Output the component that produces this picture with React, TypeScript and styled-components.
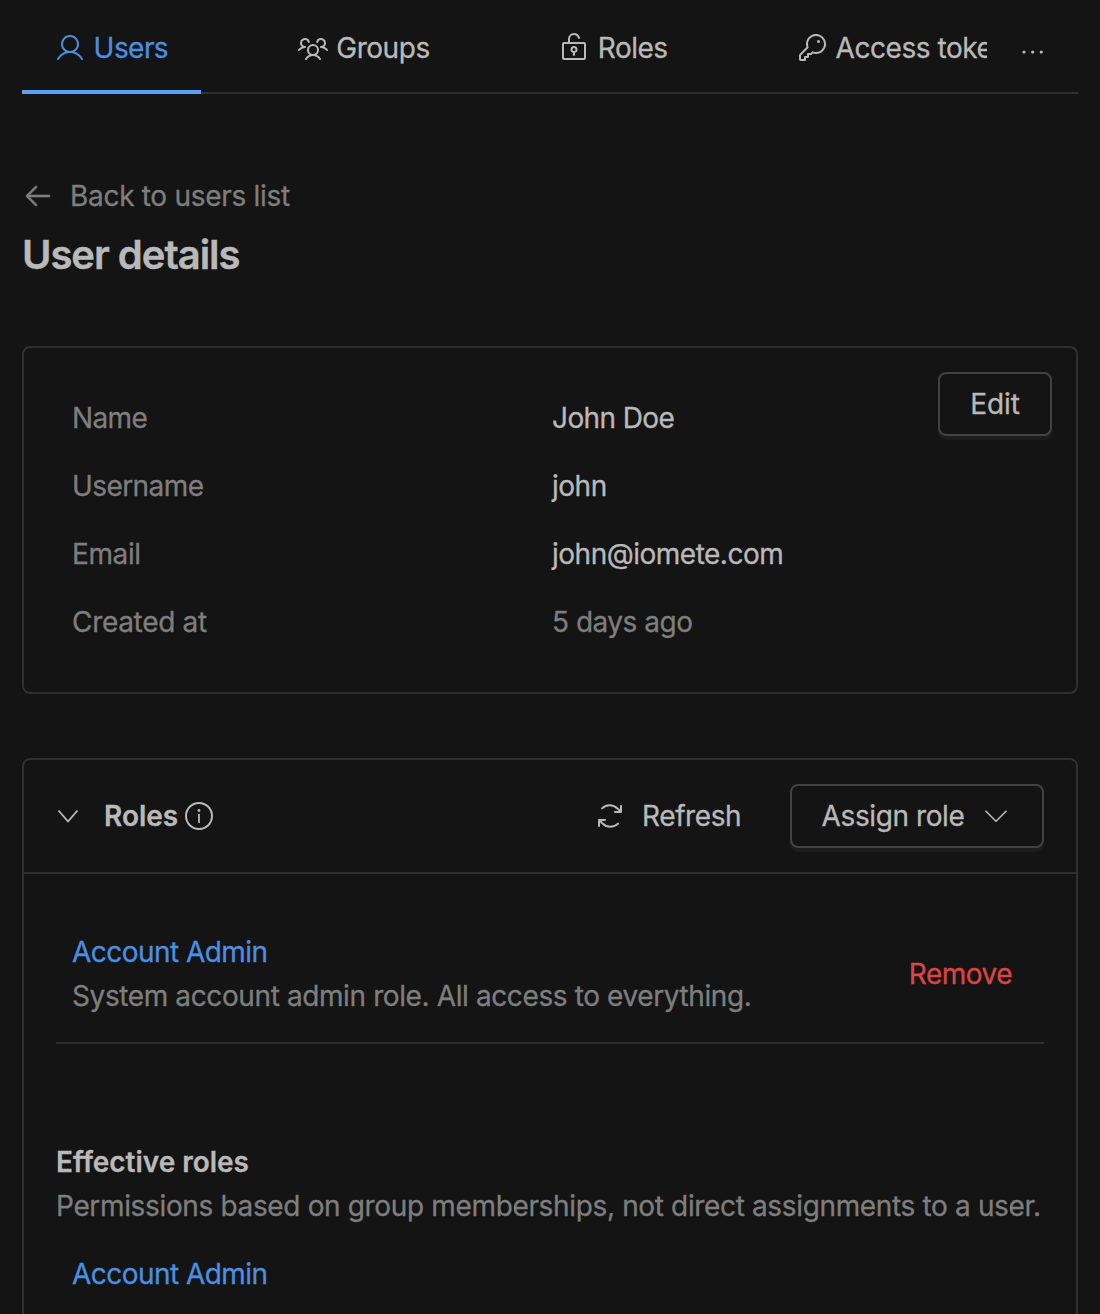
import React from "react";
import styled, { createGlobalStyle } from "styled-components";
import {
  PiUser,
  PiUsersThree,
  PiLockKeyOpen,
  PiKey,
  PiArrowLeft,
  PiArrowsClockwise,
} from "react-icons/pi";

const color = {
  page: "#141414",
  line: "#303030",
  control: "#424242",
  text: "#b9b9b9",
  muted: "#7e7e7e",
  link: "#4b8fe0",
  accent: "#58a1fb",
  danger: "#dc4446",
};

const GlobalStyle = createGlobalStyle`
  * { box-sizing: border-box; }
  body {
    margin: 0;
    background: ${color.page};
    color: ${color.text};
    font: 400 28px/44px Inter, "Liberation Sans", sans-serif;
    overflow: hidden;
  }
  svg { display: block; flex: none; }
`;

const Page = styled.main`
  height: 1314px;
  padding: 0 22px;
  overflow: hidden;
`;

const TabBar = styled.nav`
  display: flex;
  height: 94px;
  border-bottom: 2px solid ${color.line};
`;

const TabList = styled.div`
  display: flex;
  gap: 64px;
  width: 965px;
  height: 94px;
  overflow: hidden;
`;

const Tab = styled.div<{ $active?: boolean; $width: number }>`
  display: flex;
  align-items: center;
  flex: none;
  gap: 7.6px;
  width: ${(p) => p.$width}px;
  height: 94px;
  padding: 6px 0 0 32px;
  border-bottom: 4px solid ${(p) => (p.$active ? color.accent : "transparent")};
  color: ${(p) => (p.$active ? color.link : color.text)};
  white-space: nowrap;
`;

const Label = styled.span<{ $track?: number }>`
  letter-spacing: ${(p) => p.$track ?? -0.4}px;
  -webkit-text-stroke: 0.3px currentColor;
`;

const More = styled.div`
  display: flex;
  flex: 1;
  align-items: center;
  justify-content: center;
  padding-top: 11px;
`;

const BackLink = styled.a`
  display: flex;
  align-items: center;
  gap: 16px;
  margin-top: 80px;
  color: ${color.muted};

  svg {
    stroke: currentColor;
    stroke-width: 5;
  }
`;

const Title = styled.h1`
  margin: 9px 0 0;
  font-size: 40px;
  font-weight: 600;
  line-height: 56px;
  letter-spacing: -1.03px;
  -webkit-text-stroke: 0.4px currentColor;
`;

const Card = styled.section`
  border: 2px solid ${color.line};
  border-radius: 8px;
`;

const DetailsCard = styled(Card)`
  display: flex;
  align-items: flex-start;
  margin-top: 63px;
  padding: 24px 24px 36px 48px;
`;

const Details = styled.dl`
  flex: 1;
  margin: 12px 0 0;
`;

const Detail = styled.div`
  display: grid;
  grid-template-columns: 480px 1fr;
  align-items: center;
  height: 68px;
`;

const Term = styled.dt`
  color: ${color.muted};
`;

const Value = styled.dd<{ $muted?: boolean }>`
  margin: 0;
  color: ${(p) => (p.$muted ? color.muted : color.text)};
`;

const Button = styled.button<{ $width: number }>`
  display: flex;
  align-items: center;
  justify-content: center;
  gap: 16px;
  width: ${(p) => p.$width}px;
  height: 64px;
  padding: 0;
  border: 2px solid ${color.control};
  border-radius: 8px;
  background: ${color.page};
  box-shadow: 0 4px 0 #1c1c1c;
  color: inherit;
  font: inherit;
`;

const RolesCard = styled(Card)`
  height: 700px;
  margin-top: 64px;
`;

const RolesHeader = styled.header`
  display: flex;
  align-items: center;
  height: 114px;
  padding: 0 32px 0 28px;
  border-bottom: 2px solid ${color.line};
`;

const RolesTitle = styled.h2`
  display: flex;
  align-items: center;
  flex: 1;
  gap: 5px;
  margin: 0 0 0 20px;
  font-size: 28px;
  font-weight: 600;
`;

const RefreshButton = styled.div`
  display: flex;
  align-items: center;
  gap: 16px;
  width: 196px;
`;

const RolesBody = styled.div`
  padding: 32px;
`;

const RoleRow = styled.div`
  display: flex;
  align-items: center;
  justify-content: space-between;
  padding: 24px 32px 24px 16px;
  border-bottom: 2px solid ${color.line};
`;

const RoleLink = styled.a`
  display: block;
  color: ${color.link};
`;

const Note = styled.p`
  margin: 0;
  color: ${color.muted};
  white-space: nowrap;
`;

const Remove = styled.a`
  color: ${color.danger};
`;

const Effective = styled.section`
  margin-top: 96px;
`;

const SubTitle = styled.h3`
  margin: 0;
  font-size: 28px;
  font-weight: 600;
`;

const EffectiveList = styled.div`
  padding: 24px 16px;
`;

const Chevron = ({ half, depth, weight = 1.9 }: { half: number; depth: number; weight?: number }) => (
  <svg width="32" height="32" viewBox="0 0 32 32" fill="none" stroke="currentColor" strokeWidth={weight} strokeLinejoin="round">
    <path d={`M${16 - half} ${16 - depth / 2} L16 ${16 + depth / 2} L${16 + half} ${16 - depth / 2}`} />
  </svg>
);

const InfoIcon = () => (
  <svg width="32" height="32" viewBox="0 0 32 32" fill="none" stroke="currentColor" strokeWidth="2">
    <circle cx="16" cy="16" r="13" />
    <path d="M16 14v9" strokeWidth="1.8" />
    <circle cx="16" cy="10.5" r="1.4" fill="currentColor" stroke="none" />
  </svg>
);

const Dots = () => (
  <svg width="24" height="6" viewBox="0 0 24 6" fill="currentColor">
    <circle cx="3" cy="3" r="1.6" />
    <circle cx="11.7" cy="3" r="1.6" />
    <circle cx="20.3" cy="3" r="1.6" />
  </svg>
);

export default function App() {
  return (
    <>
      <GlobalStyle />
      <Page>
        <TabBar>
          <TabList>
            <Tab $active $width={178.6}>
              <PiUser size={32} />
              <Label $track={-0.55}>Users</Label>
            </Tab>
            <Tab $width={197.6}>
              <PiUsersThree size={32} />
              <Label $track={-0.45}>Groups</Label>
            </Tab>
            <Tab $width={173.8}>
              <PiLockKeyOpen size={32} />
              <Label $track={-0.5}>Roles</Label>
            </Tab>
            <Tab $width={280}>
              <PiKey size={32} />
              <Label $track={-0.45}>Access tokens</Label>
            </Tab>
          </TabList>
          <More>
            <Dots />
          </More>
        </TabBar>

        <BackLink>
          <PiArrowLeft size={32} />
          <Label $track={-0.3}>Back to users list</Label>
        </BackLink>
        <Title>User details</Title>

        <DetailsCard>
          <Details>
            <Detail>
              <Term><Label $track={-0.65}>Name</Label></Term>
              <Value><Label $track={-0.6}>John Doe</Label></Value>
            </Detail>
            <Detail>
              <Term><Label $track={-0.58}>Username</Label></Term>
              <Value><Label $track={-0.5}>john</Label></Value>
            </Detail>
            <Detail>
              <Term><Label>Email</Label></Term>
              <Value><Label $track={-0.5}>john@iomete.com</Label></Value>
            </Detail>
            <Detail>
              <Term><Label $track={-0.32}>Created at</Label></Term>
              <Value $muted><Label $track={-0.5}>5 days ago</Label></Value>
            </Detail>
          </Details>
          <Button $width={114}><Label $track={-0.1}>Edit</Label></Button>
        </DetailsCard>

        <RolesCard>
          <RolesHeader>
            <Chevron half={9.5} depth={11} />
            <RolesTitle>
              <Label $track={0}>Roles</Label>
              <InfoIcon />
            </RolesTitle>
            <RefreshButton>
              <PiArrowsClockwise size={32} />
              <Label>Refresh</Label>
            </RefreshButton>
            <Button $width={254}>
              <Label>Assign role</Label>
              <Chevron half={10.5} depth={10.5} weight={1.6} />
            </Button>
          </RolesHeader>
          <RolesBody>
            <RoleRow>
              <div>
                <RoleLink><Label $track={-0.54}>Account Admin</Label></RoleLink>
                <Note><Label $track={-0.39}>System account admin role. All access to everything.</Label></Note>
              </div>
              <Remove><Label $track={-0.5}>Remove</Label></Remove>
            </RoleRow>
            <Effective>
              <SubTitle><Label $track={-0.03}>Effective roles</Label></SubTitle>
              <Note><Label $track={-0.35}>Permissions based on group memberships, not direct assignments to a user.</Label></Note>
              <EffectiveList>
                <RoleLink><Label $track={-0.54}>Account Admin</Label></RoleLink>
              </EffectiveList>
            </Effective>
          </RolesBody>
        </RolesCard>
      </Page>
    </>
  );
}
